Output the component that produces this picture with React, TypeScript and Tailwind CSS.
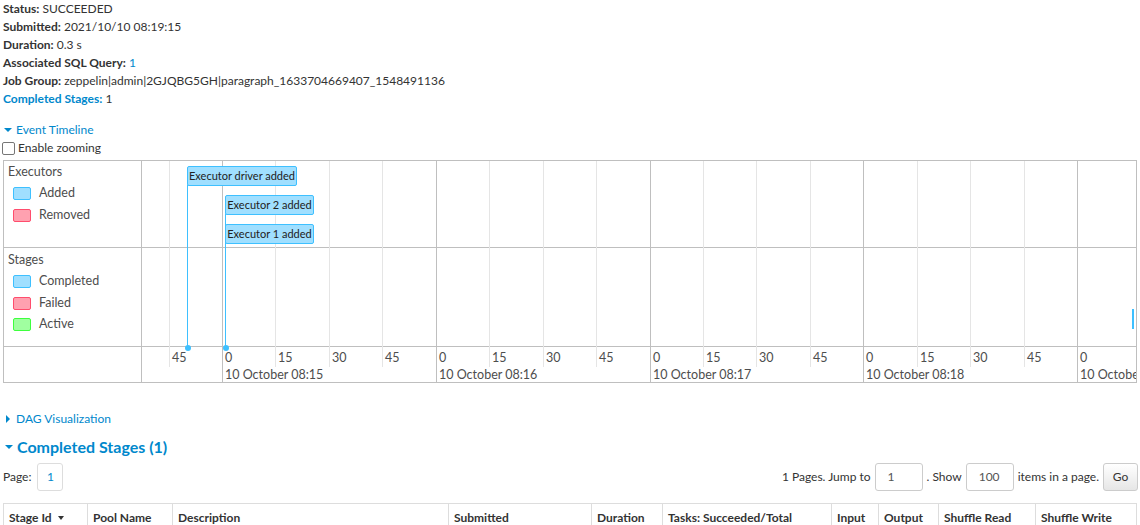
import React from "react";

const font = { fontFamily: 'Lato, "Open Sans", sans-serif' };

const MAJOR0 = 80; // chart-local x of "0" (08:15)
const MIN_W = 213.75;
const STEP = MIN_W / 4;

function Caret({ open }: { open: boolean }) {
  return open ? (
    <svg width="8" height="6" viewBox="0 0 8 6" className="inline-block">
      <path d="M0 1 L8 1 L4 5 Z" fill="#0088cc" />
    </svg>
  ) : (
    <svg width="6" height="8" viewBox="0 0 6 8" className="inline-block">
      <path d="M1 0 L5 4 L1 8 Z" fill="#0088cc" />
    </svg>
  );
}

function Legend({ fill, stroke, label }: { fill: string; stroke: string; label: string }) {
  return (
    <div className="flex items-center h-[21.5px] pl-[9px]">
      <span
        className="w-[18px] h-[13px] rounded-[2px] border"
        style={{ backgroundColor: fill, borderColor: stroke }}
      />
      <span className="ml-[8px]">{label}</span>
    </div>
  );
}

function Timeline() {
  const ticks: { x: number; label: string; major: boolean }[] = [];
  for (let j = -1; j <= 16; j++) {
    const x = MAJOR0 + j * STEP;
    const sec = ((j % 4) + 4) % 4;
    ticks.push({ x, label: String(sec * 15), major: sec === 0 });
  }
  const minutes = ["08:15", "08:16", "08:17", "08:18", "08:19"];
  return (
    <div className="mx-[3px] border border-[#bfbfbf] flex text-[12.5px] text-[#4d4d4d]">
      <div className="w-[138px] shrink-0 border-r border-[#bfbfbf] flex flex-col">
        <div className="h-[87px] border-b border-[#bfbfbf] pt-[3px]">
          <div className="pl-[4px] leading-[16px] mb-[3px]">Executors</div>
          <Legend fill="#A0DFFF" stroke="#3EC0FF" label="Added" />
          <Legend fill="#FFA1B0" stroke="#FF4D6D" label="Removed" />
        </div>
        <div className="h-[99px] border-b border-[#bfbfbf] pt-[4px]">
          <div className="pl-[4px] leading-[16px] mb-[3px]">Stages</div>
          <Legend fill="#A0DFFF" stroke="#3EC0FF" label="Completed" />
          <Legend fill="#FFA1B0" stroke="#FF4D6D" label="Failed" />
          <Legend fill="#A0FFA0" stroke="#3EFF3E" label="Active" />
        </div>
        <div className="h-[35px]" />
      </div>
      <div className="relative flex-1 overflow-hidden flex flex-col">
        <div className="h-[87px] border-b border-[#bfbfbf]" />
        <div className="h-[99px] border-b border-[#bfbfbf]" />
        <div className="h-[35px]" />
        {ticks.map((t, i) => (
          <React.Fragment key={i}>
            <div
              className={
                t.major
                  ? "absolute top-0 bottom-0 w-px bg-[#bfbfbf]"
                  : "absolute top-0 h-[206px] w-px bg-[#e5e5e5]"
              }
              style={{ left: Math.round(t.x) }}
            />
            <div
              className="absolute top-[189px] leading-[16px]"
              style={{ left: Math.round(t.x) + 3 }}
            >
              {t.label}
            </div>
          </React.Fragment>
        ))}
        {minutes.map((m, i) => (
          <div
            key={m}
            className="absolute top-[206px] leading-[16px] whitespace-nowrap"
            style={{ left: Math.round(MAJOR0 + i * MIN_W) + 3 }}
          >
            10 October {m}
          </div>
        ))}
        {/* event lines */}
        <div className="absolute left-[45px] top-[24px] h-[163px] w-px bg-[#3EC0FF]" />
        <div className="absolute left-[83px] top-[53px] h-[134px] w-px bg-[#3EC0FF]" />
        <div className="absolute left-[43px] top-[184px] w-[6px] h-[6px] rounded-full bg-[#3EC0FF]" />
        <div className="absolute left-[81px] top-[184px] w-[6px] h-[6px] rounded-full bg-[#3EC0FF]" />
        <div className="absolute left-[45px] top-[5px] h-[20px] w-[110px] bg-[#A0DFFF] border border-[#3EC0FF] rounded-[2px] text-[11px] leading-[18px] text-[#222] whitespace-nowrap flex justify-center">
          Executor driver added
        </div>
        <div className="absolute left-[83px] top-[34px] h-[20px] w-[89px] bg-[#A0DFFF] border border-[#3EC0FF] rounded-[2px] text-[11px] leading-[18px] text-[#222] whitespace-nowrap flex justify-center">
          Executor 2 added
        </div>
        <div className="absolute left-[83px] top-[63px] h-[20px] w-[89px] bg-[#A0DFFF] border border-[#3EC0FF] rounded-[2px] text-[11px] leading-[18px] text-[#222] whitespace-nowrap flex justify-center">
          Executor 1 added
        </div>
        <div className="absolute left-[990px] top-[148px] h-[20px] w-[2px] bg-[#3EC0FF]" />
      </div>
    </div>
  );
}

function Input({ value, w }: { value: string; w: string }) {
  return (
    <div
      className={`${w} h-[28px] border border-[#ccc] rounded-[3px] flex items-center pl-[12px] text-[#555] bg-white`}
    >
      {value}
    </div>
  );
}

const cols: { name: string; w: string }[] = [
  { name: "Stage Id", w: "w-[84px]" },
  { name: "Pool Name", w: "w-[85px]" },
  { name: "Description", w: "w-[276px]" },
  { name: "Submitted", w: "w-[143px]" },
  { name: "Duration", w: "w-[71px]" },
  { name: "Tasks: Succeeded/Total", w: "w-[169px]" },
  { name: "Input", w: "w-[47px]" },
  { name: "Output", w: "w-[60px]" },
  { name: "Shuffle Read", w: "w-[97px]" },
  { name: "Shuffle Write", w: "flex-1" },
];

export default function App() {
  return (
    <div className="bg-white text-[#333] text-[12px] h-[525px] overflow-hidden" style={font}>
      <div className="pl-[3px] leading-[18px]">
        <div><b>Status:</b> SUCCEEDED</div>
        <div><b>Submitted:</b> 2021/10/10 08:19:15</div>
        <div><b>Duration:</b> 0.3 s</div>
        <div><b>Associated SQL Query:</b> <span className="text-[#0088cc]">1</span></div>
        <div><b>Job Group:</b> zeppelin|admin|2GJQBG5GH|paragraph_1633704669407_1548491136</div>
        <div className="text-[#0088cc]"><b>Completed Stages:</b> <span className="text-[#333]">1</span></div>
      </div>
      <div className="mt-[13px] pl-[4px] leading-[18px] flex items-center gap-[4px] text-[#0088cc]">
        <Caret open />
        <span>Event Timeline</span>
      </div>
      <div className="flex items-center h-[18px] pl-[2px]">
        <span className="w-[13px] h-[13px] border border-[#767676] rounded-[2px] bg-white" />
        <span className="ml-[3px]">Enable zooming</span>
      </div>
      <div className="mt-[3px]">
        <Timeline />
      </div>
      <div className="mt-[27px] pl-[5px] leading-[18px] flex items-center gap-[5px] text-[#0088cc]">
        <Caret open={false} />
        <span>DAG Visualization</span>
      </div>
      <div className="mt-[7px] pl-[5px] flex items-center gap-[4px] text-[#0088cc] text-[16px] font-bold leading-[24px]">
        <Caret open />
        <span>Completed Stages (1)</span>
      </div>
      <div className="mt-[4px] pl-[3px] pr-[2px] flex items-center">
        <span>Page:</span>
        <div className="ml-[6px] w-[26px] h-[28px] border border-[#ddd] rounded-[3px] flex items-center justify-center text-[#0088cc]">
          1
        </div>
        <div className="ml-auto flex items-center">
          <span>1 Pages. Jump to</span>
          <div className="ml-[4px]"><Input value="1" w="w-[48px]" /></div>
          <span className="ml-[4px]">. Show</span>
          <div className="ml-[4px]"><Input value="100" w="w-[48px]" /></div>
          <span className="ml-[4px]">items in a page.</span>
          <button className="ml-[4px] w-[35px] h-[28px] border border-[#ccc] rounded-[3px] bg-gradient-to-b from-white to-[#e6e6e6] text-[#333]">
            Go
          </button>
        </div>
      </div>
      <div className="mt-[12px] mx-[3px] border-t border-l border-[#ddd] flex font-bold h-[30px]">
        {cols.map((c, i) => (
          <div key={i} className={`${c.w} border-r border-[#ddd] px-[5px] pt-[5px] leading-[18px] whitespace-nowrap flex items-start`}>
            {c.name}
            {i === 0 && (
              <svg width="6" height="4" viewBox="0 0 6 4" className="ml-[6px] mt-[7px]">
                <path d="M0 0 L6 0 L3 4 Z" fill="#333" />
              </svg>
            )}
          </div>
        ))}
      </div>
    </div>
  );
}
